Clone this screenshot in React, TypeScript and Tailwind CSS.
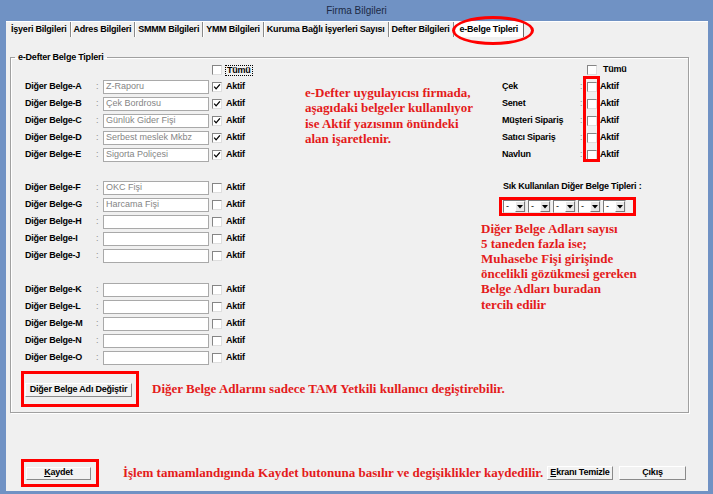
import React from "react";

function Check({ checked }: { checked?: boolean }) {
  return (
    <span className="flex items-center justify-center w-[10px] h-[10px] shrink-0 bg-white border border-t-[#858585] border-l-[#858585] border-r-[#dedede] border-b-[#dedede]">
      {checked && (
        <svg viewBox="0 0 8 8" className="w-[8px] h-[8px]">
          <path d="M1.2 3.6 L3.1 5.8 L6.9 1.4" fill="none" stroke="#000" strokeWidth="1.3" />
        </svg>
      )}
    </span>
  );
}

function BelgeRow({ label, value, checked }: { label: string; value?: string; checked?: boolean }) {
  return (
    <div className="flex items-center h-[17px]">
      <span className="w-[71px] font-bold whitespace-nowrap">{label}</span>
      <span className="w-[7px] text-[#8c8c8c]">:</span>
      <div className="w-[106px] h-[14px] border border-[#a9a9a9] bg-white flex items-center pl-[2px] text-[#858585] tracking-normal whitespace-nowrap overflow-hidden">
        {value}
      </div>
      <span className="ml-[3px]">
        <Check checked={checked} />
      </span>
      <span className="ml-[4px] font-bold">Aktif</span>
    </div>
  );
}

function RightRow({ label }: { label: string }) {
  return (
    <div className="flex items-center h-[17px]">
      <span className="ml-[21px] w-[78px] font-bold whitespace-nowrap">{label}</span>
      <span className="w-[7px] text-[#8c8c8c]">:</span>
      <Check />
      <span className="ml-[3px] font-bold">Aktif</span>
    </div>
  );
}

function Combo() {
  return (
    <div className="flex w-[23px] h-[13px] shrink-0 bg-white border border-t-[#7a7a7a] border-l-[#7a7a7a] border-r-[#e4e4e4] border-b-[#e4e4e4]">
      <span className="flex-1 pl-[2px] leading-[11px]">-</span>
      <span className="w-[10px] h-full bg-[#e8e8e8] border border-t-white border-l-white border-r-[#7a7a7a] border-b-[#7a7a7a] flex items-center justify-center">
        <svg width="6" height="4" viewBox="0 0 6 4">
          <path d="M0 0H6L3 3.5Z" fill="#000" />
        </svg>
      </span>
    </div>
  );
}

const btn =
  "flex items-center justify-center bg-[#f2f2f2] border border-t-white border-l-white border-r-[#8a8a8a] border-b-[#8a8a8a] font-bold whitespace-nowrap shrink-0";

const redText =
  "font-['Liberation_Serif','Times_New_Roman',serif] font-bold text-[13px] tracking-normal text-[#e41b1b] whitespace-nowrap";

export default function App() {
  const tabs = [
    "İşyeri Bilgileri",
    "Adres Bilgileri",
    "SMMM Bilgileri",
    "YMM Bilgileri",
    "Kuruma Bağlı İşyerleri Sayısı",
    "Defter Bilgileri",
  ];
  return (
    <div className="w-[713px] h-[494px] bg-[#7092c4] flex flex-col font-['Liberation_Sans',Arial,sans-serif] text-[9px] tracking-[-0.22px] text-black overflow-hidden">
      <div className="h-[21px] shrink-0 flex items-center justify-center text-[10px] tracking-normal text-[#1c2a44]">
        Firma Bilgileri
      </div>
      <div className="ml-[6px] w-[702px] h-[470px] bg-[#f0f0f0] flex flex-col">
        {/* Tabs */}
        <div className="h-[16px] shrink-0 flex items-stretch pl-[2px] border-t border-white">
          {tabs.map((t) => (
            <div key={t} className="flex items-center px-[3px] font-bold whitespace-nowrap border-r border-r-[#8a8a8a] shadow-[1px_0_0_white]">
              {t}
            </div>
          ))}
          <div className="relative ml-[1px] flex items-center pl-[5px] pr-[5px] bg-white font-bold whitespace-nowrap border-r border-r-[#6a6a6a]">
            e-Belge Tipleri
            <div className="absolute left-[-3px] top-[-6px] w-[82px] h-[29px] rounded-[50%] border-[3px] border-[#ff0000]" />
          </div>
        </div>

        {/* Group box */}
        <fieldset className="mt-[15px] ml-[4px] w-[679px] h-[361px] shrink-0 p-0 border border-[#a0a0a0] shadow-[1px_1px_0_white,inset_1px_1px_0_white]">
          <legend className="ml-[4px] px-[3px] font-bold leading-[10px]">e-Defter Belge Tipleri</legend>
          <div className="flex flex-col pl-[14px]">
            <div className="flex">
              {/* Left column */}
              <div className="w-[280px] shrink-0 flex flex-col">
                <div className="h-[16px] flex items-center pl-[187px]">
                  <Check />
                  <span className="ml-[3px] font-bold border border-dotted border-black px-[1px] leading-[9px]">Tümü</span>
                </div>
                <BelgeRow label="Diğer Belge-A" value="Z-Raporu" checked />
                <BelgeRow label="Diğer Belge-B" value="Çek Bordrosu" checked />
                <BelgeRow label="Diğer Belge-C" value="Günlük Gider Fişi" checked />
                <BelgeRow label="Diğer Belge-D" value="Serbest meslek Mkbz" checked />
                <BelgeRow label="Diğer Belge-E" value="Sigorta Poliçesi" checked />
                <div className="h-[16px]" />
                <BelgeRow label="Diğer Belge-F" value="OKC Fişi" />
                <BelgeRow label="Diğer Belge-G" value="Harcama Fişi" />
                <BelgeRow label="Diğer Belge-H" />
                <BelgeRow label="Diğer Belge-I" />
                <BelgeRow label="Diğer Belge-J" />
                <div className="h-[17px]" />
                <BelgeRow label="Diğer Belge-K" />
                <BelgeRow label="Diğer Belge-L" />
                <BelgeRow label="Diğer Belge-M" />
                <BelgeRow label="Diğer Belge-N" />
                <BelgeRow label="Diğer Belge-O" />
              </div>

              {/* Middle annotation */}
              <div className={`w-[176px] shrink-0 mt-[23px] leading-[15.3px] ${redText}`}>
                <div>e-Defter uygulayıcısı firmada,</div>
                <div>aşagıdaki belgeler kullanılıyor</div>
                <div>ise Aktif yazısının önündeki</div>
                <div>alan işaretlenir.</div>
              </div>

              {/* Right column */}
              <div className="flex-1 flex flex-col">
                <div className="h-[16px] flex items-center pl-[106px]">
                  <Check />
                  <span className="ml-[6px] font-bold">Tümü</span>
                </div>
                <div className="relative flex flex-col">
                  <RightRow label="Çek" />
                  <RightRow label="Senet" />
                  <RightRow label="Müşteri Sipariş" />
                  <RightRow label="Satıcı Sipariş" />
                  <RightRow label="Navlun" />
                  <div className="absolute left-[102px] top-[-2px] w-[17px] h-[86px] border-[3px] border-[#ff0000]" />
                </div>
                <div className="mt-[17px] pl-[22px] h-[12px] leading-[12px] font-bold whitespace-nowrap">
                  Sık Kullanılan Diğer Belge Tipleri :
                </div>
                <div className="mt-[5px] ml-[18px] w-[137px] h-[19px] border-[3px] border-[#ff0000] flex items-center pl-[1px] gap-[2px]">
                  <Combo />
                  <Combo />
                  <Combo />
                  <Combo />
                  <Combo />
                </div>
                <div className={`mt-[4.5px] leading-[15.2px] ${redText}`}>
                  <div>Diğer Belge Adları sayısı</div>
                  <div>5 taneden fazla ise;</div>
                  <div>Muhasebe Fişi girişinde</div>
                  <div>öncelikli gözükmesi gereken</div>
                  <div>Belge Adları buradan</div>
                  <div>tercih edilir</div>
                </div>
              </div>
            </div>

            {/* Button row */}
            <div className="mt-[5px] flex items-center">
              <div className="ml-[-4px] h-[36px] border-[3px] border-[#ff0000] pt-[9px] pl-[1px] pr-[4px]">
                <div className={`${btn} w-[107px] h-[14px]`}>Diğer Belge Adı Değiştir</div>
              </div>
              <span className={`ml-[13px] ${redText}`}>
                Diğer Belge Adlarını sadece TAM Yetkili kullanıcı degiştirebilir.
              </span>
            </div>
          </div>
        </fieldset>

        {/* Bottom row */}
        <div className="mt-[46px] h-[28px] shrink-0 flex items-center">
          <div className="ml-[15px] w-[78px] h-[28px] border-[3px] border-[#ff0000] flex items-center pl-[2px] shrink-0">
            <div className={`${btn} w-[65px] h-[13px]`}>
              <span className="underline">K</span>aydet
            </div>
          </div>
          <span className={`ml-[24px] ${redText}`}>
            İşlem tamamlandıgında Kaydet butonuna basılır ve degişiklikler kaydedilir.
          </span>
          <div className="ml-auto mr-[22px] flex items-center gap-[6px]">
            <div className={`${btn} w-[66px] h-[14px]`}>
              <span className="underline">E</span>kranı Temizle
            </div>
            <div className={`${btn} w-[67px] h-[14px]`}>Çıkış</div>
          </div>
        </div>
      </div>
    </div>
  );
}
